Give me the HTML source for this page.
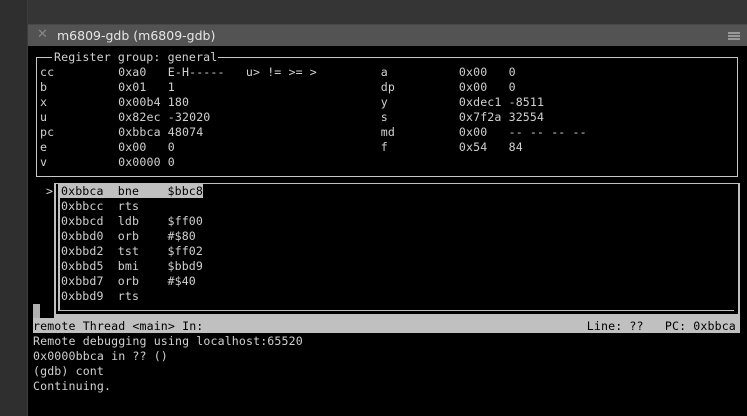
<!DOCTYPE html>
<html><head><meta charset="utf-8"><style>
*{margin:0;padding:0}
body{width:747px;height:416px;background:#000;position:relative;overflow:hidden;font-family:"DejaVu Sans Mono","Liberation Mono",monospace;font-size:11.6px;color:#d0d0d0}
.a{position:absolute}
pre{position:absolute;font:inherit;line-height:15px;white-space:pre;letter-spacing:0.12px}
</style></head><body>
<div class="a" style="left:0;top:0;width:27px;height:416px;background:#2f2f2f"></div>
<div class="a" style="left:27px;top:0;width:1px;height:416px;background:#3c3c3c"></div>
<div class="a" style="left:28px;top:0;width:719px;height:24px;background:#353535"></div>
<div class="a" style="left:28px;top:24px;width:719px;height:1px;background:#474747"></div>
<div class="a" style="left:28px;top:25px;width:719px;height:21px;background:#535353"></div>
<div class="a" style="left:37px;top:27px;color:#888;font-family:'DejaVu Sans',sans-serif;font-size:13px">✕</div>
<div class="a" style="left:57px;top:28px;color:#e6e6e6;font-family:'DejaVu Sans','Liberation Sans',sans-serif;font-size:12.5px">m6809-gdb (m6809-gdb)</div>
<div class="a" style="left:728px;top:32px;width:12px;height:2px;background:#999;box-shadow:0 3px 0 #999,0 6px 0 #999"></div>
<div class="a" style="left:36px;top:57px;width:700px;height:119px;border:1px solid #c8c8c8;border-top:none"></div>
<div class="a" style="left:36px;top:57px;width:16px;height:1px;background:#c8c8c8"></div>
<div class="a" style="left:218px;top:57px;width:519px;height:1px;background:#c8c8c8"></div>
<pre style="left:54px;top:50px">Register group: general</pre>
<pre style="left:40px;top:65px">cc         0xa0   E-H-----   u&gt; != &gt;= &gt;         a          0x00   0
b          0x01   1                             dp         0x00   0
x          0x00b4 180                           y          0xdec1 -8511
u          0x82ec -32020                        s          0x7f2a 32554
pc         0xbbca 48074                         md         0x00   -- -- -- --
e          0x00   0                             f          0x54   84
v          0x0000 0</pre>
<div class="a" style="left:54px;top:183px;width:686px;height:135px;background:#c0c0c0"></div>
<div class="a" style="left:56px;top:184px;width:682px;height:130px;background:#000"></div>
<div class="a" style="left:58px;top:184px;width:676px;height:127px;background:#c0c0c0"></div>
<div class="a" style="left:60px;top:184px;width:674px;height:126px;background:#000"></div>
<div class="a" style="left:60px;top:184px;width:143px;height:14px;background:#c0c0c0"></div>
<pre style="left:46px;top:184px">&gt;</pre>
<pre style="left:61px;top:184px"><span style="color:#000">0xbbca  bne    $bbc8</span>
0xbbcc  rts
0xbbcd  ldb    $ff00
0xbbd0  orb    #$80
0xbbd2  tst    $ff02
0xbbd5  bmi    $bbd9
0xbbd7  orb    #$40
0xbbd9  rts</pre>
<div class="a" style="left:33px;top:304px;width:7px;height:14px;background:#b0b0b0"></div>
<div class="a" style="left:33px;top:318px;width:707px;height:15px;background:#c0c0c0"></div>
<pre style="left:33px;top:319px;color:#000">remote Thread &lt;main&gt; In:                                                      Line: ??   PC: 0xbbca</pre>
<pre style="left:33px;top:334px">Remote debugging using localhost:65520
0x0000bbca in ?? ()
(gdb) cont
Continuing.</pre>
</body></html>
